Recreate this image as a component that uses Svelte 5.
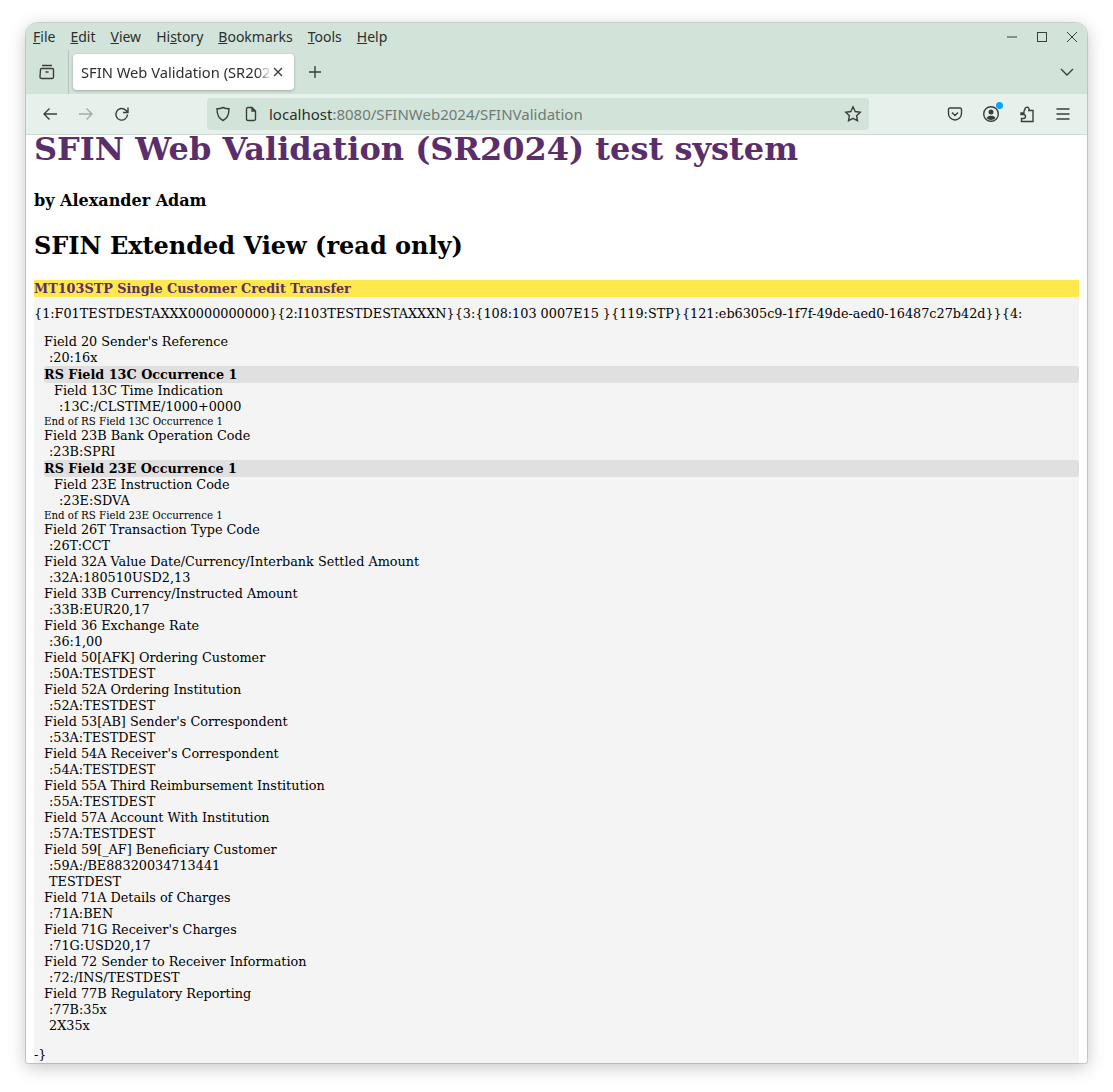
<script>
  const menus = [
    ['F', 'ile'],
    ['E', 'dit'],
    ['V', 'iew'],
    ['Hi', 's', 'tory'],
    ['B', 'ookmarks'],
    ['T', 'ools'],
    ['H', 'elp']
  ];

  // type: f = field title, v = value, rs = repeating block header, end = block end
  const rows = [
    ['f', "Field 20 Sender's Reference"],
    ['v', ':20:16x'],
    ['rs', 'RS Field 13C Occurrence 1'],
    ['f2', 'Field 13C Time Indication'],
    ['v2', ':13C:/CLSTIME/1000+0000'],
    ['end', 'End of RS Field 13C Occurrence 1'],
    ['f', 'Field 23B Bank Operation Code'],
    ['v', ':23B:SPRI'],
    ['rs', 'RS Field 23E Occurrence 1'],
    ['f2', 'Field 23E Instruction Code'],
    ['v2', ':23E:SDVA'],
    ['end', 'End of RS Field 23E Occurrence 1'],
    ['f', 'Field 26T Transaction Type Code'],
    ['v', ':26T:CCT'],
    ['f', 'Field 32A Value Date/Currency/Interbank Settled Amount'],
    ['v', ':32A:180510USD2,13'],
    ['f', 'Field 33B Currency/Instructed Amount'],
    ['v', ':33B:EUR20,17'],
    ['f', 'Field 36 Exchange Rate'],
    ['v', ':36:1,00'],
    ['f', 'Field 50[AFK] Ordering Customer'],
    ['v', ':50A:TESTDEST'],
    ['f', 'Field 52A Ordering Institution'],
    ['v', ':52A:TESTDEST'],
    ['f', "Field 53[AB] Sender's Correspondent"],
    ['v', ':53A:TESTDEST'],
    ['f', "Field 54A Receiver's Correspondent"],
    ['v', ':54A:TESTDEST'],
    ['f', 'Field 55A Third Reimbursement Institution'],
    ['v', ':55A:TESTDEST'],
    ['f', 'Field 57A Account With Institution'],
    ['v', ':57A:TESTDEST'],
    ['f', 'Field 59[_AF] Beneficiary Customer'],
    ['v', ':59A:/BE88320034713441'],
    ['v', 'TESTDEST'],
    ['f', 'Field 71A Details of Charges'],
    ['v', ':71A:BEN'],
    ['f', "Field 71G Receiver's Charges"],
    ['v', ':71G:USD20,17'],
    ['f', 'Field 72 Sender to Receiver Information'],
    ['v', ':72:/INS/TESTDEST'],
    ['f', 'Field 77B Regulatory Reporting'],
    ['v', ':77B:35x'],
    ['v', '2X35x']
  ];
</script>

<div class="desktop">
  <div class="window">
    <div class="menubar">
      <div class="menus">
        {#each menus as m}
          <span>{#if m.length === 3}{m[0]}<u>{m[1]}</u>{m[2]}{:else}<u>{m[0]}</u>{m[1]}{/if}</span>
        {/each}
      </div>
      <div class="winctl">
        <svg width="14" height="14" viewBox="0 0 14 14"><path d="M2 7h10" /></svg>
        <svg width="14" height="14" viewBox="0 0 14 14"><rect x="2.5" y="2.5" width="9" height="9" /></svg>
        <svg width="14" height="14" viewBox="0 0 14 14"><path d="M2 2l10 10M12 2L2 12" /></svg>
      </div>
    </div>

    <div class="tabstrip">
      <div class="tabview">
        <svg width="18" height="18" viewBox="0 0 18 18">
          <path d="M4 2.500h10M2.500 6.500a1 1 0 0 1 1-1h11a1 1 0 0 1 1 1v7.500a1.500 1.500 0 0 1-1.500 1.500h-10.500a1.500 1.500 0 0 1-1.500-1.500zM7.500 9h3" />
        </svg>
      </div>
      <div class="tab">
        <span class="tabtitle">SFIN Web Validation (SR2024) test system</span>
        <svg width="10" height="10" viewBox="0 0 10 10"><path d="M1 1l8 8M9 1l-8 8" /></svg>
      </div>
      <svg class="newtab" width="16" height="16" viewBox="0 0 16 16"><path d="M8 2v12M2 8h12" /></svg>
      <svg class="alltabs" width="16" height="16" viewBox="0 0 16 16"><path d="M2 5l6 6 6-6" /></svg>
    </div>

    <div class="navbar">
      <svg class="nav" width="18" height="18" viewBox="0 0 18 18"><path d="M16 9H3M8.500 3.500L3 9l5.500 5.500" /></svg>
      <svg class="nav off" width="18" height="18" viewBox="0 0 18 18"><path d="M2 9h13M9.500 3.500L15 9l-5.500 5.500" /></svg>
      <svg class="nav" width="18" height="18" viewBox="0 0 18 18"><path d="M14.500 9.500a5.800 5.800 0 1 1-1.700-4.300L15 7.300M15 2.500v5h-5" /></svg>
      <div class="urlbar">
        <svg width="16" height="16" viewBox="0 0 16 16"><path d="M8 1.500c2 1 3.800 1.300 6 1.300 0 6-1.500 9.700-6 11.700-4.500-2-6-5.700-6-11.700 2.200 0 4-.3 6-1.300z" /></svg>
        <svg class="doc" width="16" height="16" viewBox="0 0 16 16"><path d="M3.500 3a1.500 1.500 0 0 1 1.500-1.500h4l3.500 3.500v8a1.500 1.500 0 0 1-1.500 1.500h-6a1.500 1.500 0 0 1-1.500-1.500zM9 1.500v3.500h3.500" /></svg>
        <span class="url"><b>localhost</b>:8080/SFINWeb2024/SFINValidation</span>
        <svg width="18" height="18" viewBox="0 0 18 18"><path d="M9 1.800l2.200 4.700 5.100.7-3.700 3.500.9 5.100L9 13.400l-4.500 2.400.9-5.100-3.700-3.500 5.100-.7z" /></svg>
      </div>
      <div class="tools">
        <svg width="18" height="18" viewBox="0 0 18 18"><path d="M2.500 4.500a1.500 1.500 0 0 1 1.500-1.500h10a1.500 1.500 0 0 1 1.500 1.500v4a6.500 6.500 0 0 1-13 0zM6 7.500l3 3 3-3" /></svg>
        <div class="account">
          <svg width="18" height="18" viewBox="0 0 18 18">
            <circle cx="9" cy="9" r="7.300" />
            <circle class="solid" cx="9" cy="7" r="2.500" />
            <path class="solid" d="M4.500 13c1-1.800 2.500-2.300 4.500-2.300s3.500.5 4.500 2.300c-1 1.300-2.700 2-4.500 2s-3.500-.7-4.500-2z" />
          </svg>
          <span class="dot"></span>
        </div>
        <svg width="18" height="18" viewBox="0 0 18 18"><path d="M3 8h3V6.500a2.200 2.200 0 0 1 1-1.800c-1-2 3-3.700 4-1.200.3.500.2 1 0 1.500l-.2.500H15v11H3.500v-3h2a1.500 1.500 0 0 0 0-4H3z" /></svg>
        <svg width="18" height="18" viewBox="0 0 18 18"><path d="M2.500 4h13M2.500 9h13M2.500 14h13" /></svg>
      </div>
    </div>

    <div class="content">
      <h1>SFIN Web Validation (SR2024) test system</h1>
      <h4>by Alexander Adam</h4>
      <h2>SFIN Extended View (read only)</h2>
      <div class="msgtype">MT103STP Single Customer Credit Transfer</div>
      <div class="msg">
        <div class="head">{'{'}1:F01TESTDESTAXXX0000000000{'}'}{'{'}2:I103TESTDESTAXXXN{'}'}{'{'}3:{'{'}108:103 0007E15 {'}'}{'{'}119:STP{'}'}{'{'}121:eb6305c9-1f7f-49de-aed0-16487c27b42d{'}'}{'}'}{'{'}4:</div>
        <div class="rows">
          {#each rows as r}
            <div class={r[0]}>{r[1]}</div>
          {/each}
        </div>
        <div class="tail">-{'}'}</div>
      </div>
    </div>
  </div>
</div>

<style>
  :global(body) {
    background: #fff;
  }

  .desktop {
    height: 1092px;
    box-sizing: border-box;
    padding: 23px 26px 29px;
    overflow: hidden;
    display: flex;
  }

  .window {
    flex: 1;
    min-width: 0;
    display: flex;
    flex-direction: column;
    overflow: hidden;
    border-radius: 12px 12px 2px 2px;
    background: #fff;
    box-shadow: 0 0 0 1px rgba(0, 0, 0, 0.14), 0 4px 18px rgba(0, 0, 0, 0.24);
    font-family: "Noto Sans", "Open Sans", sans-serif;
    color: #2b2f2d;
  }

  svg {
    fill: none;
    stroke: #3a3f3c;
    stroke-width: 1.400;
    flex-shrink: 0;
  }

  .menubar {
    height: 27px;
    flex-shrink: 0;
    display: flex;
    align-items: center;
    justify-content: space-between;
    background: #d2e3da;
    font-size: 14px;
    padding: 0 8px 0 7px;
  }

  .menus {
    display: flex;
    gap: 15px;
  }

  .winctl {
    display: flex;
    gap: 16px;
  }

  .winctl svg {
    stroke-width: 1;
  }

  .tabstrip {
    height: 44px;
    flex-shrink: 0;
    display: flex;
    align-items: flex-start;
    background: #d2e3da;
  }

  .tabview {
    width: 43px;
    height: 44px;
    border-right: 1px solid #b4c4bb;
    display: flex;
    align-items: center;
    justify-content: center;
    box-sizing: border-box;
  }

  .tab {
    margin: 4px 0 0 4px;
    width: 221px;
    height: 36px;
    box-sizing: border-box;
    padding: 0 11px 0 8px;
    display: flex;
    align-items: center;
    justify-content: space-between;
    background: #fff;
    border-radius: 4px;
    box-shadow: 0 1px 3px rgba(0, 0, 0, 0.25);
    font-size: 14.700px;
  }

  .tabtitle {
    width: 191px;
    overflow: hidden;
    white-space: nowrap;
    -webkit-mask-image: linear-gradient(to right, #000 92%, transparent);
    mask-image: linear-gradient(to right, #000 92%, transparent);
  }

  .newtab {
    margin: 14px 0 0 13px;
  }

  .alltabs {
    margin: 14px 12px 0 auto;
  }

  .navbar {
    height: 40px;
    flex-shrink: 0;
    display: flex;
    align-items: center;
    background: #e7f1ec;
    border-bottom: 1px solid #d0d8d3;
    padding: 0 15px;
  }

  .nav {
    margin-right: 18px;
  }

  .nav.off {
    stroke: #a4aaa7;
  }

  .urlbar {
    margin-left: 58px;
    width: 662px;
    height: 32px;
    flex-shrink: 0;
    border-radius: 4px;
    background: #d2e3da;
    display: flex;
    align-items: center;
    padding: 0 7px 0 8px;
    box-sizing: border-box;
    font-size: 15px;
  }

  .doc {
    margin-left: 12px;
  }

  .url {
    margin-left: 10px;
    flex: 1;
    color: #6f7a75;
  }

  .url b {
    font-weight: 400;
    color: #2b2f2d;
  }

  .tools {
    margin-left: auto;
    display: flex;
    gap: 18px;
  }

  .account {
    position: relative;
    height: 18px;
  }

  .dot {
    position: absolute;
    top: -3px;
    right: -3px;
    width: 7px;
    height: 7px;
    border-radius: 50%;
    background: #0aa5ff;
  }

  .solid {
    fill: #3a3f3c;
    stroke: none;
  }

  .content {
    flex: 1;
    min-height: 0;
    display: flex;
    flex-direction: column;
    padding: 0 8px;
    color: #000;
    font-family: "DejaVu Serif", serif;
    font-size: 12.800px;
  }

  h1 {
    margin: -5px 0 0;
    font-size: 32px;
    line-height: 38px;
    color: #5a2e6a;
  }

  h4 {
    margin: 23px 0 0;
    font-size: 16px;
    line-height: 19px;
  }

  h2 {
    margin: 22px 0 0;
    font-size: 24px;
    line-height: 28px;
  }

  .msgtype {
    margin-top: 20px;
    height: 17px;
    line-height: 17px;
    background: #ffe84d;
    color: #5a2e6a;
    font-weight: 700;
  }

  .msg {
    flex: 1;
    background: #f4f4f4;
    line-height: 16px;
  }

  .head {
    padding-top: 9px;
    white-space: pre;
  }

  .rows {
    margin-top: 12px;
    padding-left: 10px;
  }

  .v {
    padding-left: 5px;
  }

  .rs {
    font-weight: 700;
    background: #e0e0e0;
    border-radius: 3px;
    height: 17px;
    line-height: 17px;
  }

  .f2 {
    padding-left: 10px;
  }

  .v2 {
    padding-left: 15px;
  }

  .end {
    font-size: 10.240px;
    line-height: 13px;
  }

  .tail {
    margin-top: 13px;
  }
</style>
